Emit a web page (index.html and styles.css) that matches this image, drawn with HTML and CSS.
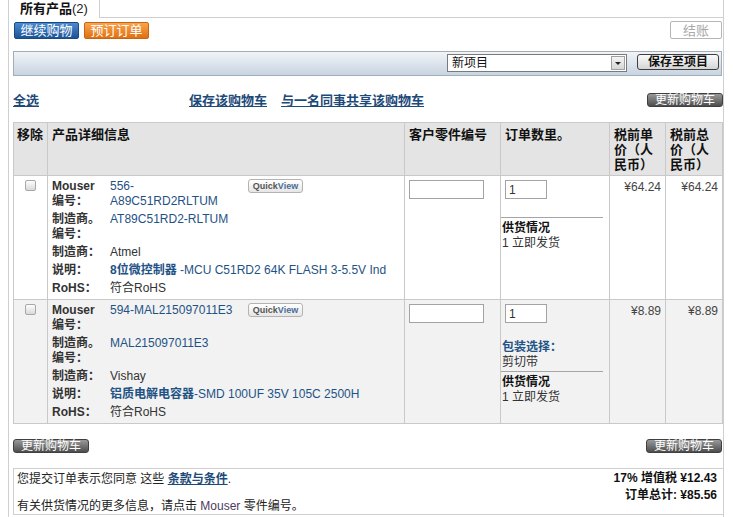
FILE: index.html
```html
<!DOCTYPE html>
<html lang="zh-CN">
<head>
  <meta charset="UTF-8" />
  <title>购物车</title>
  <link rel="stylesheet" href="styles.css">
</head>
<body>
<div class="page">

  <div class="tabs">
    <div class="tab">所有产品<span class="count">(2)</span></div>
  </div>

  <div class="actions">
    <div class="actions-left">
      <button class="btn btn-blue">继续购物</button>
      <button class="btn btn-orange">预订订单</button>
    </div>
    <button class="btn btn-off">结账</button>
  </div>

  <div class="project-bar">
    <div class="select">新项目<span class="select-arrow"></span></div>
    <button class="btn-save">保存至项目</button>
  </div>

  <div class="cart-tools">
    <a href="#" class="link">全选</a>
    <div class="cart-links">
      <a href="#" class="link">保存该购物车</a>
      <a href="#" class="link">与一名同事共享该购物车</a>
    </div>
    <button class="btn-dark">更新购物车</button>
  </div>

  <table class="cart">
    <colgroup>
      <col class="col-rm">
      <col class="col-prod">
      <col class="col-cust">
      <col class="col-qty">
      <col class="col-price">
      <col class="col-total">
    </colgroup>
    <thead>
      <tr>
        <th class="th-rm">移除</th>
        <th>产品详细信息</th>
        <th>客户零件编号</th>
        <th>订单数里。</th>
        <th>税前单价（人民币）</th>
        <th>税前总价（人民币）</th>
      </tr>
    </thead>
    <tbody>
      <tr>
        <td class="c-rm"><input type="checkbox" class="chk" /></td>
        <td class="c-prod">
          <div class="specs">
            <span class="lbl">Mouser 编号：</span>
            <span class="val pn-row"><a href="#" class="plink pn">556-A89C51RD2RLTUM</a><button class="qv">Quick<span>View</span></button></span>
            <span class="lbl">制造商。编号：</span>
            <span class="val"><a href="#" class="plink">AT89C51RD2-RLTUM</a></span>
            <span class="lbl">制造商：</span>
            <span class="val">Atmel</span>
            <span class="lbl">说明：</span>
            <span class="val"><a href="#" class="plink"><b>8位微控制器</b> -MCU C51RD2 64K FLASH 3-5.5V Ind</a></span>
            <span class="lbl">RoHS：</span>
            <span class="val">符合RoHS</span>
          </div>
        </td>
        <td class="c-cust"><input type="text" class="txt" /></td>
        <td class="c-qty">
          <input type="text" class="txt qty" value="1" />
          <div class="avail">
            <b>供货情况</b><br>
            1 立即发货
          </div>
        </td>
        <td class="c-money">¥64.24</td>
        <td class="c-money">¥64.24</td>
      </tr>
      <tr class="alt">
        <td class="c-rm"><input type="checkbox" class="chk" /></td>
        <td class="c-prod">
          <div class="specs">
            <span class="lbl">Mouser 编号：</span>
            <span class="val pn-row"><a href="#" class="plink pn">594-MAL215097011E3</a><button class="qv">Quick<span>View</span></button></span>
            <span class="lbl">制造商。编号：</span>
            <span class="val"><a href="#" class="plink">MAL215097011E3</a></span>
            <span class="lbl">制造商：</span>
            <span class="val">Vishay</span>
            <span class="lbl">说明：</span>
            <span class="val"><a href="#" class="plink"><b>铝质电解电容器</b>-SMD 100UF 35V 105C 2500H</a></span>
            <span class="lbl">RoHS：</span>
            <span class="val">符合RoHS</span>
          </div>
        </td>
        <td class="c-cust"><input type="text" class="txt" /></td>
        <td class="c-qty">
          <input type="text" class="txt qty" value="1" />
          <div class="pack">
            <b>包装选择：</b><br>
            剪切带
          </div>
          <div class="avail avail-tight">
            <b>供货情况</b><br>
            1 立即发货
          </div>
        </td>
        <td class="c-money">¥8.89</td>
        <td class="c-money">¥8.89</td>
      </tr>
    </tbody>
  </table>

  <div class="bottom-actions">
    <button class="btn-dark">更新购物车</button>
    <button class="btn-dark">更新购物车</button>
  </div>

  <div class="summary">
    <div class="terms">
      <p>您提交订单表示您同意 这些 <a href="#" class="link">条款与条件</a>.</p>
      <p class="more">有关供货情况的更多信息，请点击 <span class="mouser">Mouser</span> 零件编号。</p>
    </div>
    <div class="totals">
      <div>17% 增值税 ¥12.43</div>
      <div>订单总计: ¥85.56</div>
    </div>
  </div>

</div>
</body>
</html>
```

FILE: styles.css
```css
body {
  margin: 0;
  font-family: "Liberation Sans", "Noto Sans CJK SC", sans-serif;
  font-size: 12px;
  line-height: 15px;
  color: #333;
  background: #fff;
}

.page {
  margin-left: 8px;
  width: 710px;
  min-height: 517px;
  padding-left: 4px;
  border-left: 1px solid #cfcfcf;
  border-right: 1px solid #cfcfcf;
}

button {
  font-family: inherit;
  padding: 0;
  cursor: pointer;
}

/* tabs */
.tabs {
  display: flex;
  height: 18px;
  margin-left: -4px;
}
.tabs::after {
  content: "";
  flex: 1;
  border-bottom: 1px solid #cfcfcf;
}
.tab {
  box-sizing: border-box;
  width: 91px;
  height: 18px;
  padding-left: 11px;
  border-right: 1px solid #cfcfcf;
  font-size: 13px;
  font-weight: bold;
  line-height: 18px;
  color: #111;
}
.tab .count {
  font-weight: normal;
  color: #222;
}

/* buttons */
.actions {
  display: flex;
  justify-content: space-between;
  align-items: flex-start;
  margin-top: 4px;
}
.actions-left {
  display: flex;
  gap: 5px;
  margin-left: 1px;
}
.btn {
  box-sizing: border-box;
  width: 65px;
  height: 17px;
  font-size: 13px;
  line-height: 15px;
  color: #fff;
  border-radius: 2px;
}
.btn-blue {
  background: linear-gradient(#4a8ad0, #1d5396);
  border: 1px solid #1b4a80;
}
.btn-orange {
  background: linear-gradient(#f9a54e, #e06f12);
  border: 1px solid #c9650f;
}
.btn-off {
  width: 52px;
  height: 18px;
  margin-top: -1px;
  margin-right: 1px;
  background: #fff;
  border: 1px solid #b5b5b5;
  color: #a8a8a8;
}

/* project bar */
.project-bar {
  box-sizing: border-box;
  width: 709px;
  height: 25px;
  margin-top: 12px;
  padding: 2px 2px 0 0;
  display: flex;
  justify-content: flex-end;
  align-items: flex-start;
  background: linear-gradient(#f1f4f8, #c7d4e1);
  border: 1px solid #a3adb8;
}
.select {
  position: relative;
  box-sizing: border-box;
  width: 180px;
  height: 18px;
  padding-left: 4px;
  background: #fff;
  border: 1px solid #7a7a7a;
  font-size: 12px;
  line-height: 16px;
  color: #111;
}
.select-arrow {
  position: absolute;
  top: 1px;
  right: 1px;
  width: 14px;
  height: 14px;
  background: linear-gradient(#f4f4f4, #d6d6d6);
  border: 1px solid #a0a0a0;
  box-sizing: border-box;
}
.select-arrow::after {
  content: "";
  position: absolute;
  left: 3px;
  top: 5px;
  border-left: 3px solid transparent;
  border-right: 3px solid transparent;
  border-top: 3px solid #222;
}
.btn-save {
  box-sizing: border-box;
  width: 82px;
  height: 16px;
  margin-left: 10px;
  background: linear-gradient(#fbfbfb, #d5d5d5);
  border: 1px solid #3e3e3e;
  border-radius: 3px;
  font-size: 12px;
  font-weight: bold;
  line-height: 13px;
  color: #111;
}

/* links row */
.cart-tools {
  display: flex;
  align-items: center;
  height: 14px;
  margin-top: 17px;
}
.link {
  font-size: 13px;
  font-weight: bold;
  color: #1d4a78;
  text-decoration: underline;
}
.cart-links {
  display: flex;
  gap: 14px;
  margin-left: 150px;
}
.btn-dark {
  box-sizing: border-box;
  width: 76px;
  height: 14px;
  margin-left: auto;
  background: linear-gradient(#999, #4d4d4d);
  border: 1px solid #3f3f3f;
  border-radius: 3px;
  font-size: 12px;
  line-height: 12px;
  color: #fff;
}

/* cart table */
.cart {
  width: 709px;
  margin-top: 15px;
  border-collapse: collapse;
  table-layout: fixed;
}
.col-rm { width: 34px; }
.col-prod { width: 357px; }
.col-cust { width: 96px; }
.col-qty { width: 109px; }
.col-price { width: 56px; }
.col-total { width: 57px; }

.cart th,
.cart td {
  border: 1px solid #c9c9c9;
  vertical-align: top;
  text-align: left;
}
.cart th {
  padding: 4px 4px 3px 4px;
  background: #e4e4e4;
  font-size: 13px;
  font-weight: bold;
  color: #111;
}
.cart th.th-rm {
  padding-left: 3px;
  padding-right: 0;
  white-space: nowrap;
}

.cart tr.alt td {
  background: #f2f2f2;
}

.c-rm {
  padding: 4px 0 0 11px;
}
.chk {
  appearance: none;
  display: block;
  width: 11px;
  height: 11px;
  margin: 0;
  border: 1px solid #a8a8a8;
  border-radius: 2px;
  background: linear-gradient(#fdfdfd, #d9d9d9);
}

.c-prod {
  padding: 3px 4px;
}
.specs {
  display: grid;
  grid-template-columns: 58px 1fr;
  row-gap: 3px;
}
.lbl {
  padding-right: 4px;
  font-weight: bold;
  color: #333;
}
.val {
  color: #333;
}
.plink {
  color: #1f5285;
  text-decoration: none;
}
.pn-row {
  display: flex;
  align-items: flex-start;
}
.pn {
  width: 128px;
}
.qv {
  box-sizing: border-box;
  width: 55px;
  height: 14px;
  margin-left: 10px;
  background: linear-gradient(#fff, #e6e6e6);
  border: 1px solid #b3b3b3;
  border-radius: 3px;
  font-size: 9px;
  font-weight: bold;
  line-height: 11px;
  color: #555;
}
.qv span {
  color: #4a6d96;
}

.c-cust {
  padding: 4px 0 0 4px;
}
.txt {
  box-sizing: border-box;
  width: 75px;
  height: 19px;
  margin: 0;
  padding: 0 3px;
  border: 1px solid #a3a3a3;
  font-family: inherit;
  font-size: 12px;
  color: #333;
  display: block;
}
.c-qty {
  padding: 4px 0 0 0;
}
.txt.qty {
  width: 42px;
  margin-left: 4px;
}
.pack {
  margin-top: 17px;
  padding-left: 1px;
}
.pack b {
  color: #1f5285;
}
.avail {
  margin: 18px 6px 0 0;
  padding: 3px 0 0 1px;
  border-top: 1px solid #a5a5a5;
  color: #333;
}
.avail b {
  color: #111;
}
.avail-tight {
  margin-top: 1px;
}

.cart td.c-money {
  padding: 4px 4px 0 0;
  text-align: right;
  color: #444;
}

/* bottom */
.bottom-actions {
  display: flex;
  justify-content: space-between;
  width: 709px;
  margin-top: 15px;
}
.bottom-actions .btn-dark {
  margin-left: 0;
}

.summary {
  display: flex;
  justify-content: space-between;
  margin-top: 15px;
  margin-right: -1px;
  padding: 3px 6px 0 3px;
  border: 1px solid #cfcfcf;
  color: #222;
}
.terms p {
  margin: 0;
}
.terms .link {
  font-size: 12px;
}
.terms .more {
  margin-top: 12px;
}
.mouser {
  color: #4d3b5e;
}
.totals {
  text-align: right;
  font-weight: bold;
  line-height: 17px;
  margin-top: -2px;
  color: #111;
}
```
